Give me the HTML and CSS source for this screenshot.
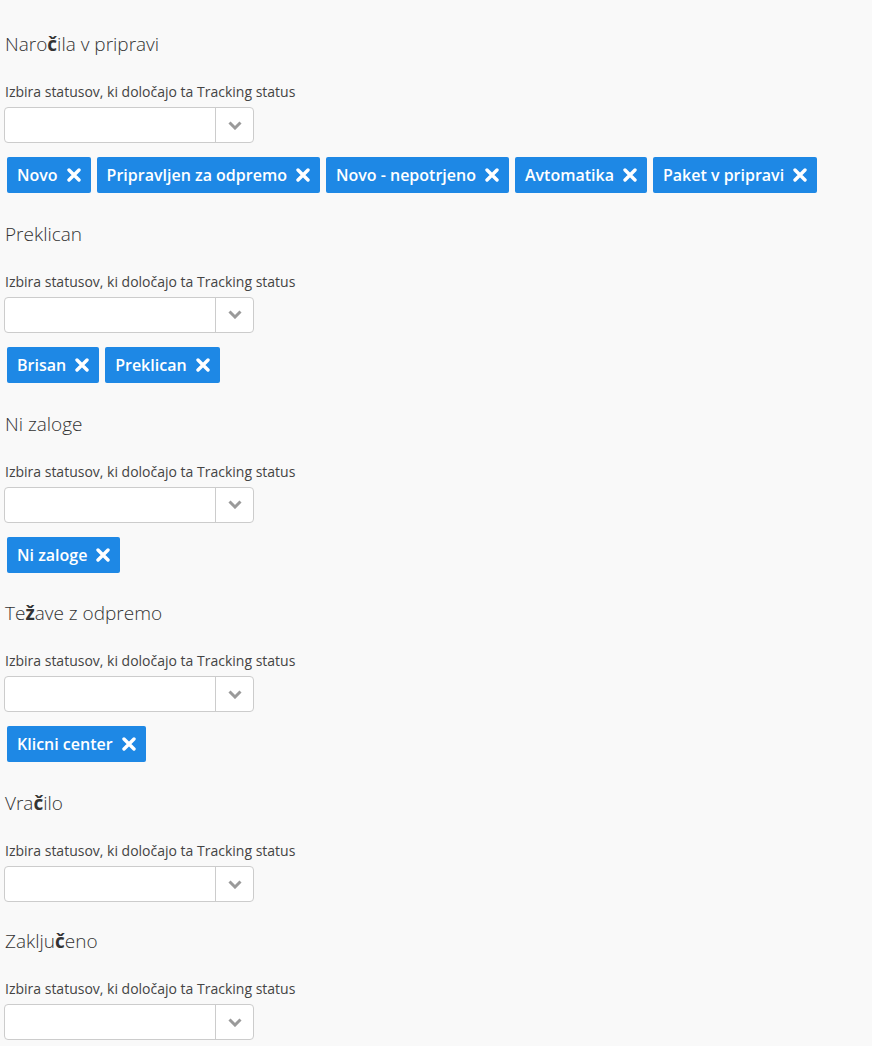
FILE: index.html
```html
<!DOCTYPE html>
<html lang="sl">
<head>
<meta charset="utf-8">
<title>Tracking status</title>
<link rel="stylesheet" href="styles.css">
</head>
<body>
<main class="page">
  <section class="group">
    <h2 class="group-title">Naro<span class="fb">č</span>ila v pripravi</h2>
    <label class="field-label">Izbira statusov, ki določajo ta Tracking status</label>
    <div class="select"><div class="select-value"></div><div class="select-arrow"><svg width="14" height="9" viewBox="0 0 14 9"><path d="M1.5 1.5 L7 7 L12.5 1.5" fill="none" stroke="#9a9a9a" stroke-width="3"/></svg></div></div>
    <div class="tags">
      <span class="tag">Novo<svg class="x" width="14" height="14" viewBox="0 0 14 14"><path d="M2 2 L12 12 M12 2 L2 12" stroke="#fff" stroke-width="3.4" stroke-linecap="round"/></svg></span>
      <span class="tag">Pripravljen za odpremo<svg class="x" width="14" height="14" viewBox="0 0 14 14"><path d="M2 2 L12 12 M12 2 L2 12" stroke="#fff" stroke-width="3.4" stroke-linecap="round"/></svg></span>
      <span class="tag">Novo - nepotrjeno<svg class="x" width="14" height="14" viewBox="0 0 14 14"><path d="M2 2 L12 12 M12 2 L2 12" stroke="#fff" stroke-width="3.4" stroke-linecap="round"/></svg></span>
      <span class="tag">Avtomatika<svg class="x" width="14" height="14" viewBox="0 0 14 14"><path d="M2 2 L12 12 M12 2 L2 12" stroke="#fff" stroke-width="3.4" stroke-linecap="round"/></svg></span>
      <span class="tag">Paket v pripravi<svg class="x" width="14" height="14" viewBox="0 0 14 14"><path d="M2 2 L12 12 M12 2 L2 12" stroke="#fff" stroke-width="3.4" stroke-linecap="round"/></svg></span>
    </div>
  </section>
  <section class="group">
    <h2 class="group-title">Preklican</h2>
    <label class="field-label">Izbira statusov, ki določajo ta Tracking status</label>
    <div class="select"><div class="select-value"></div><div class="select-arrow"><svg width="14" height="9" viewBox="0 0 14 9"><path d="M1.5 1.5 L7 7 L12.5 1.5" fill="none" stroke="#9a9a9a" stroke-width="3"/></svg></div></div>
    <div class="tags">
      <span class="tag">Brisan<svg class="x" width="14" height="14" viewBox="0 0 14 14"><path d="M2 2 L12 12 M12 2 L2 12" stroke="#fff" stroke-width="3.4" stroke-linecap="round"/></svg></span>
      <span class="tag">Preklican<svg class="x" width="14" height="14" viewBox="0 0 14 14"><path d="M2 2 L12 12 M12 2 L2 12" stroke="#fff" stroke-width="3.4" stroke-linecap="round"/></svg></span>
    </div>
  </section>
  <section class="group">
    <h2 class="group-title">Ni zaloge</h2>
    <label class="field-label">Izbira statusov, ki določajo ta Tracking status</label>
    <div class="select"><div class="select-value"></div><div class="select-arrow"><svg width="14" height="9" viewBox="0 0 14 9"><path d="M1.5 1.5 L7 7 L12.5 1.5" fill="none" stroke="#9a9a9a" stroke-width="3"/></svg></div></div>
    <div class="tags">
      <span class="tag">Ni zaloge<svg class="x" width="14" height="14" viewBox="0 0 14 14"><path d="M2 2 L12 12 M12 2 L2 12" stroke="#fff" stroke-width="3.4" stroke-linecap="round"/></svg></span>
    </div>
  </section>
  <section class="group">
    <h2 class="group-title">Te<span class="fb">ž</span>ave z odpremo</h2>
    <label class="field-label">Izbira statusov, ki določajo ta Tracking status</label>
    <div class="select"><div class="select-value"></div><div class="select-arrow"><svg width="14" height="9" viewBox="0 0 14 9"><path d="M1.5 1.5 L7 7 L12.5 1.5" fill="none" stroke="#9a9a9a" stroke-width="3"/></svg></div></div>
    <div class="tags">
      <span class="tag">Klicni center<svg class="x" width="14" height="14" viewBox="0 0 14 14"><path d="M2 2 L12 12 M12 2 L2 12" stroke="#fff" stroke-width="3.4" stroke-linecap="round"/></svg></span>
    </div>
  </section>
  <section class="group">
    <h2 class="group-title">Vra<span class="fb">č</span>ilo</h2>
    <label class="field-label">Izbira statusov, ki določajo ta Tracking status</label>
    <div class="select"><div class="select-value"></div><div class="select-arrow"><svg width="14" height="9" viewBox="0 0 14 9"><path d="M1.5 1.5 L7 7 L12.5 1.5" fill="none" stroke="#9a9a9a" stroke-width="3"/></svg></div></div>
  </section>
  <section class="group">
    <h2 class="group-title">Zaklju<span class="fb">č</span>eno</h2>
    <label class="field-label">Izbira statusov, ki določajo ta Tracking status</label>
    <div class="select"><div class="select-value"></div><div class="select-arrow"><svg width="14" height="9" viewBox="0 0 14 9"><path d="M1.5 1.5 L7 7 L12.5 1.5" fill="none" stroke="#9a9a9a" stroke-width="3"/></svg></div></div>
  </section>
</main>
</body>
</html>
```
FILE: styles.css
```css
html, body {
  margin: 0;
  padding: 0;
  background: #f9f9f9;
}
body {
  font-family: "Open Sans", "Noto Sans", sans-serif;
  color: #333;
}
.page {
  padding: 32px 0 0 5px;
  display: flex;
  flex-direction: column;
  gap: 27px;
}
.group {
  display: flex;
  flex-direction: column;
}
.group-title {
  margin: 0;
  font-size: 19px;
  line-height: 24px;
  font-weight: 300;
  color: #333;
}
.fb {
  font-weight: 700;
}
.field-label {
  margin-top: 26px;
  font-size: 14px;
  line-height: 20px;
  color: #444;
}
.select {
  margin: 5px 0 0 -1px;
  width: 250px;
  height: 36px;
  box-sizing: border-box;
  border: 1px solid #ccc;
  border-radius: 4px;
  background: #fff;
  display: flex;
}
.select-value {
  flex: 1;
}
.select-arrow {
  width: 37px;
  border-left: 1px solid #ccc;
  display: flex;
  align-items: center;
  justify-content: center;
}
.tags {
  margin: 14px 0 1.75px 2px;
  display: flex;
  flex-wrap: wrap;
  gap: 6px;
}
.tag {
  height: 36px;
  box-sizing: border-box;
  padding: 0 10px;
  background: #1e88e5;
  color: #fff;
  border-radius: 2px;
  font-size: 16px;
  font-weight: 600;
  display: inline-flex;
  align-items: center;
  gap: 9px;
}
.x {
  display: block;
}
```
